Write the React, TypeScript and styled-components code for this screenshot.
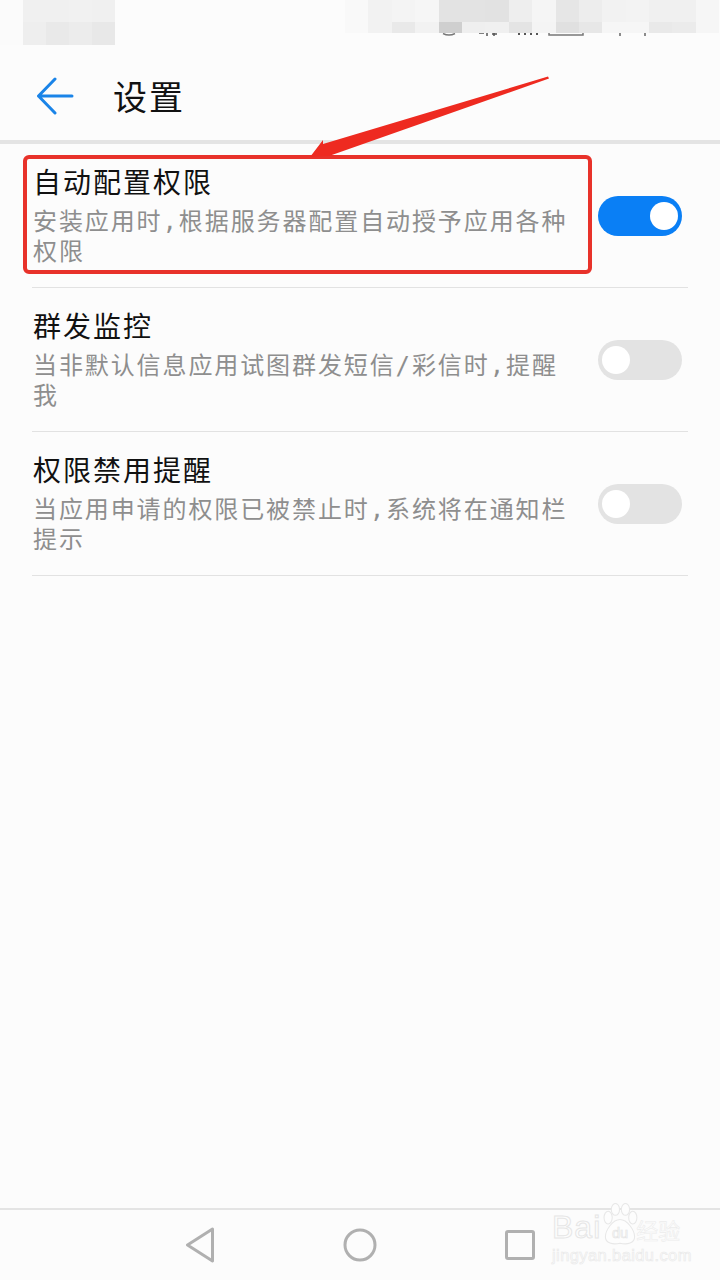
import styled, { createGlobalStyle } from "styled-components";

const GlobalStyle = createGlobalStyle`
  html, body {
    margin: 0;
    padding: 0;
    background: #fcfcfc;
  }
`;

const leftCells = [
  ["#fbfbfb", "#f0f0f0", "#f0f0f0", "#f1f1f1", "#f0f0f0"],
  ["#fbfbfb", "#eeeeee", "#e9e9e9", "#ececec", "#e8e8e8"],
];

const rightCells = [
  ["#f9f9f9", "#f2f2f2", "#f4f4f4", "#f6f6f6", "#e3e3e3", "#e3e3e3", "#e2e2e2", "#eeeeee", "#f5f5f5", "#e6e6e6", "#ededed", "#f2f2f2", "#f3f3f3", "#f0f0f0", "#f0f0f0", "#f6f6f6"],
  ["#f9f9f9", "#f2f2f2", "#e9e9e9", "#f2f2f2", "#cfcfcf", "#efefef", "#f0f0f0", "#e4e4e4", "#f4f4f4", "#e0e0e0", "#e7e7e7", "#f6f6f6", "#f6f6f6", "#e9e9e9", "#ebebeb", "#f6f6f6"],
];

const settings = [
  { title: "自动配置权限", desc: "安装应用时,根据服务器配置自动授予应用各种权限", on: true },
  { title: "群发监控", desc: "当非默认信息应用试图群发短信/彩信时,提醒我", on: false },
  { title: "权限禁用提醒", desc: "当应用申请的权限已被禁止时,系统将在通知栏提示", on: false },
];

const App = () => {
  return (
    <Page>
      <GlobalStyle />
      <StatusBar>
        <Mosaic $cols={5} $cellW={23} $rowB={23}>
          {leftCells.flat().map((c, i) => (
            <Cell key={i} $color={c} />
          ))}
        </Mosaic>
        <RightStatus>
          <Mosaic $cols={16} $cellW={23.4} $rowB={11}>
            {rightCells.flat().map((c, i) => (
              <Cell key={i} $color={c} />
            ))}
          </Mosaic>
          <StatusLeftovers width="375" height="6" viewBox="0 0 375 6">
            <path d="M98 0.5 q6 3 12 0" fill="none" stroke="#777" strokeWidth="1.5" />
            <path d="M134 0 h5 M142 0 v3 M149 0 v3 M147 1 h5" fill="none" stroke="#555" strokeWidth="1.5" />
            <path d="M174 0 v2 M180 0 v2 M186 0 v2 M192 0 v2" fill="none" stroke="#555" strokeWidth="2" />
            <path d="M204 0 v2 h34 v-2" fill="none" stroke="#777" strokeWidth="1.5" />
            <path d="M275 0 v3 M300 0 v3" fill="none" stroke="#666" strokeWidth="1.5" />
          </StatusLeftovers>
        </RightStatus>
      </StatusBar>

      <Header>
        <svg width="38" height="38" viewBox="0 0 38 38">
          <path d="M19 2 L2.5 19 L19 36 M2.5 19 H36" fill="none" stroke="#1a84e8" strokeWidth="3" strokeLinecap="round" strokeLinejoin="round" />
        </svg>
        <HeaderTitle>设置</HeaderTitle>
      </Header>

      <List>
        {settings.map((item) => (
          <Row key={item.title}>
            <RowText>
              <RowTitle>{item.title}</RowTitle>
              <RowDesc>{item.desc}</RowDesc>
            </RowText>
            <Toggle $on={item.on}>
              <Knob />
            </Toggle>
          </Row>
        ))}
      </List>

      <NavBar>
        <svg width="30" height="36" viewBox="0 0 30 36">
          <path d="M27.5 2 L2.5 18 L27.5 34 Z" fill="none" stroke="#b0b0b0" strokeWidth="3" strokeLinejoin="round" />
        </svg>
        <svg width="34" height="34" viewBox="0 0 34 34">
          <circle cx="17" cy="17" r="15" fill="none" stroke="#b0b0b0" strokeWidth="3" />
        </svg>
        <svg width="30" height="30" viewBox="0 0 30 30">
          <rect x="1.5" y="1.5" width="27" height="27" rx="1.5" fill="none" stroke="#b0b0b0" strokeWidth="3" />
        </svg>
        <Watermark>
          <WatermarkTop>
            <WatermarkLatin>Bai</WatermarkLatin>
            <svg width="38" height="42" viewBox="0 0 40 46">
              <g fill="#fdfdfd" stroke="#e8e8e8" strokeWidth="1.2">
                <ellipse cx="7" cy="16" rx="4.5" ry="7" />
                <ellipse cx="15" cy="7" rx="4.5" ry="6.5" />
                <ellipse cx="26" cy="7" rx="4.5" ry="6.5" />
                <ellipse cx="34" cy="16" rx="4.5" ry="7" />
                <path d="M20 18 C12 18 4 30 4 37 C4 44 12 46 20 44 C28 46 36 44 36 37 C36 30 28 18 20 18 Z" />
              </g>
              <text x="20" y="38" textAnchor="middle" fontFamily="'Liberation Sans', sans-serif" fontSize="16" fill="#fdfdfd" stroke="#e6e6e6" strokeWidth="0.8">du</text>
            </svg>
            <WatermarkCjk>经验</WatermarkCjk>
          </WatermarkTop>
          <WatermarkUrl>jingyan.baidu.com</WatermarkUrl>
        </Watermark>
      </NavBar>

      <HighlightBox />
      <ArrowMark width="260" height="90" viewBox="0 0 260 90">
        <polygon points="248,0.5 23,68 23,64 10,81 29,80 249,2.5" fill="#ee2a20" />
      </ArrowMark>
    </Page>
  );
};

export default App;

const Page = styled.div`
  position: relative;
  width: 720px;
  height: 1280px;
  overflow: hidden;
  display: flex;
  flex-direction: column;
  background: #fcfcfc;
  font-family: "Noto Sans CJK SC", "Noto Sans", sans-serif;
`;

const StatusBar = styled.div`
  height: 51px;
  display: flex;
  justify-content: space-between;
  align-items: flex-start;
`;

const RightStatus = styled.div`
  display: flex;
  flex-direction: column;
`;

const StatusLeftovers = styled.svg`
  display: block;
`;

const Mosaic = styled.div<{ $cols: number; $cellW: number; $rowB: number }>`
  display: grid;
  grid-template-columns: repeat(${(p) => p.$cols}, ${(p) => p.$cellW}px);
  grid-template-rows: 22px ${(p) => p.$rowB}px;
`;

const Cell = styled.div<{ $color: string }>`
  background: ${(p) => p.$color};
`;

const Header = styled.div`
  height: 89px;
  padding-left: 36px;
  display: flex;
  align-items: center;
  gap: 39px;
  border-bottom: 4px solid #e4e4e4;
`;

const HeaderTitle = styled.div`
  font-size: 34px;
  letter-spacing: 2px;
  line-height: 44px;
  color: #111;
`;

const List = styled.div`
  flex: 1;
  padding: 0 32px;
`;

const Row = styled.div`
  height: 144px;
  box-sizing: border-box;
  display: flex;
  align-items: center;
  justify-content: space-between;
  border-bottom: 1px solid #e2e2e2;
`;

const RowText = styled.div`
  width: 540px;
  padding-left: 1px;
  padding-bottom: 3px;
`;

const RowTitle = styled.div`
  font-size: 28px;
  letter-spacing: 2px;
  line-height: 38px;
  color: #111;
  margin-bottom: 7px;
`;

const RowDesc = styled.div`
  font-family: "DejaVu Sans Mono", "Noto Sans CJK SC", monospace;
  font-size: 24px;
  letter-spacing: 1.9px;
  line-height: 30px;
  color: #8e8e8e;
`;

const Toggle = styled.div<{ $on: boolean }>`
  width: 84px;
  height: 40px;
  margin-right: 6px;
  border-radius: 20px;
  display: flex;
  align-items: center;
  padding: 0 4px;
  box-sizing: border-box;
  justify-content: ${(p) => (p.$on ? "flex-end" : "flex-start")};
  background: ${(p) => (p.$on ? "#0a7ff5" : "#e3e3e3")};
`;

const Knob = styled.div`
  width: 28px;
  height: 28px;
  border-radius: 50%;
  background: #fff;
`;

const NavBar = styled.div`
  position: relative;
  height: 72px;
  box-sizing: border-box;
  border-top: 2px solid #e4e4e4;
  display: grid;
  grid-template-columns: 30px 34px 30px;
  justify-content: start;
  column-gap: 128px;
  align-items: center;
  padding-left: 185px;
`;

const Watermark = styled.div`
  position: absolute;
  left: 552px;
  top: -7px;
  display: flex;
  flex-direction: column;
  color: #fdfdfd;
`;

const WatermarkTop = styled.div`
  display: flex;
  align-items: flex-end;
`;

const WatermarkLatin = styled.span`
  font-family: "Liberation Sans", sans-serif;
  font-size: 32px;
  line-height: 36px;
  letter-spacing: 1px;
  -webkit-text-stroke: 1px #e6e6e6;
`;

const WatermarkCjk = styled.span`
  font-size: 22px;
  line-height: 32px;
  margin-left: -3px;
  -webkit-text-stroke: 0.6px #ececec;
`;

const WatermarkUrl = styled.span`
  font-family: "Liberation Sans", sans-serif;
  font-size: 16.5px;
  line-height: 20px;
  letter-spacing: 0.4px;
  -webkit-text-stroke: 0.6px #e8e8e8;
`;

const HighlightBox = styled.div`
  position: absolute;
  left: 23px;
  top: 155px;
  width: 569px;
  height: 119px;
  box-sizing: border-box;
  border: 4px solid #e8322a;
  border-radius: 6px;
`;

const ArrowMark = styled.svg`
  position: absolute;
  left: 300px;
  top: 76px;
`;
